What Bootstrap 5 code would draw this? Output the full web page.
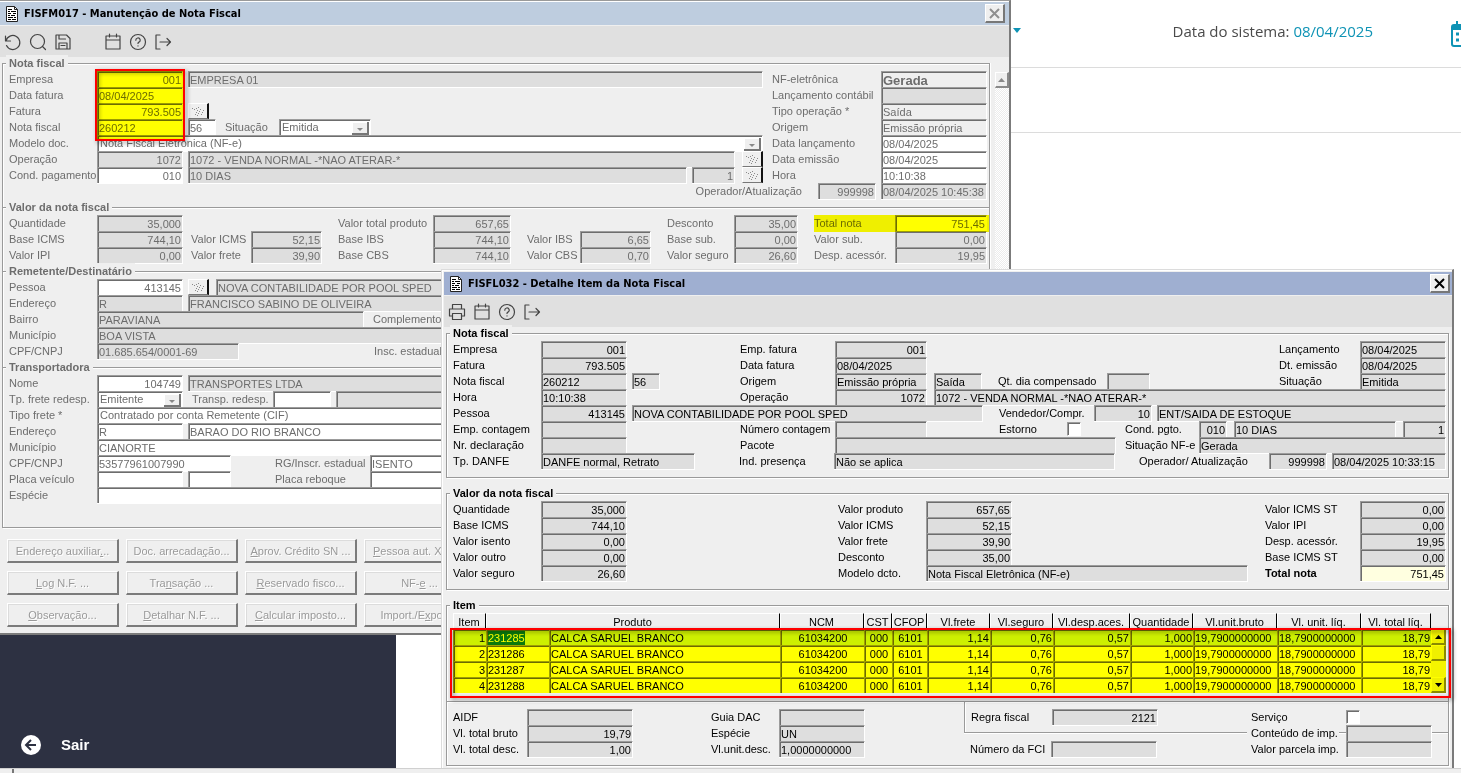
<!DOCTYPE html>
<html lang="pt-BR">
<head>
<meta charset="utf-8">
<meta name="viewport" content="width=device-width, initial-scale=1">
<title>Manutenção de Nota Fiscal</title>
<link href="https://cdn.jsdelivr.net/npm/bootstrap@5.3.0/dist/css/bootstrap.min.css" rel="stylesheet">
<style>
body{font-family:"Liberation Sans",Arial,sans-serif;font-size:11px;line-height:16px;background:#fff;overflow:hidden}
/* host page */
.topbar{height:68px;border-bottom:1px solid #dcdcdc;color:#4a4a4a}
.sysdate{margin-right:78px;margin-top:-6px;font:15px/24px "Open Sans",sans-serif}
.teal{color:#0e93b5}
.subbar{height:65px;border-bottom:1px solid #dcdcdc}
.calic{margin-right:-12px;flex:none}
.drop{position:absolute;left:1013px;top:28px;border:4px solid transparent;border-top:5px solid #0e93b5;border-bottom:0}
.side{width:396px;height:140px;background:#2d3142;color:#fff;padding:0 0 13px 21px}
.side a{color:#fff;font:bold 15px/20px "Liberation Sans",sans-serif;gap:20px}
.strip{height:5px;background:#efefef;border-top:1px solid #d0d0d0}
.strip i{width:2px;height:5px;margin-left:12px;background:#777}
/* windows */
.win{position:absolute;background:#efefef;border-right:2px solid #7b7b7b}
.win1{left:0;top:0;width:calc(100% - 450px);color:#6d6d6d;border-top:1px solid #9a9a9a;border-bottom:2px solid #7b7b7b;box-shadow:inset 0 1px #fff}
.win2{left:441px;top:269px;right:7px;color:#000;border-left:1px solid #dcdcdc;border-top:1px solid #dcdcdc;box-shadow:inset 1px 1px #fff}
.tbar{height:22px;font:bold 11px/22px "DejaVu Sans Condensed","DejaVu Sans",sans-serif;color:#000;padding:0 4px 0 6px;gap:6px}
.win1 .tbar{margin:1px 0 0;background:#becddf;height:23px}
.win2 .tbar{margin:2px 0 0 2px;background:#9fafd1;height:23px;padding-right:2px}
.xbtn{width:20px;height:19px;padding:0;line-height:0;background:#efefef;border:1px solid #fff;border-right:2px solid #777;border-bottom:2px solid #777;color:inherit}
.win1 .xbtn{color:#8f8f8f}
.tools{height:31px;background:#e0e0e0;margin-top:1px}
.win2 .tools{margin-left:2px}
.tb{width:25px;padding:0;border:0;background:none;color:#444;line-height:0}
.tools svg{fill:none;stroke:currentColor;stroke-width:1.2;stroke-linecap:round;stroke-linejoin:round}
.pane1{margin:6px 0 0 2px}
.pane2{margin:6px 3px 2px 4px}
/* groups */
.grp{position:relative;min-width:0;border:1px solid #9a9a9a;border-bottom:0;padding:7px 2px 8px 6px;box-shadow:inset 1px 1px #fff,1px 0 #fff}
.grp.shut{border-bottom:1px solid #9a9a9a;box-shadow:inset 1px 1px #fff,1px 1px #fff}
.grp legend{position:absolute;top:-9px;left:3px;width:auto;margin:0;padding:0 3px;background:#efefef;font-size:11px;line-height:16px;font-weight:bold}
.apart{margin-bottom:15px}
.rw{display:flex;height:16px}
.rw label{height:16px;line-height:16px;white-space:nowrap;flex:none}
.fld{display:block;flex:none;min-width:0;height:16px;padding:1px 1px 0;border:1px solid #9c9c9c;border-right-color:#fff;border-bottom:0;border-radius:0;background:#dedede;color:inherit;font-size:11px;line-height:13px;box-shadow:inset 1px 1px #6d6d6d,0 1px #fff;outline:0}
.fld.on{background-color:#fff}
.fld.off{background:#efefef}
.fld.cream{background:#ffffe0}
.fld.r{text-align:right}
.fld.grow{flex:1 1 0}
.fld.big{font-size:13px;font-weight:bold}
select.fld{appearance:none;padding:0 2px;background-repeat:no-repeat;background-position:right 1px top 2px;background-image:url("data:image/svg+xml,%3Csvg xmlns='http://www.w3.org/2000/svg' width='17' height='13'%3E%3Crect width='17' height='13' fill='%23777'/%3E%3Crect width='15' height='11' fill='%23fff'/%3E%3Crect x='1' y='1' width='14' height='10' fill='%23efefef'/%3E%3Cpath d='M5 6h6l-3 3z' fill='%23888'/%3E%3C/svg%3E")}
.dots{flex:none;width:21px;height:16px;padding:0;line-height:0;background:#efefef;border:1px solid #fff;border-right:2px solid #111;border-bottom:1px solid #777}
.dots svg{width:12px;height:9px;fill:#8a8a8a}
.a28{width:28px}.a43{width:43px}.a48{width:48px}.a58{width:58px}.a86{width:86px}.a92{width:92px}.a106{width:106px}.a114{width:114px}
.a134{width:134px}.a142{width:142px}.a154{width:154px}.a267{width:267px}.a281{width:281px}.a322{width:322px}.a351{width:351px}
.l54{width:54px}.l68{width:68px}.l74{width:74px}.l81{width:81px}.l88{width:88px}.l95{width:95px}.l109{width:109px}.l130{width:130px}
.g5{margin-left:5px}.g7{margin-left:7px}.g9{margin-left:9px}.g16{margin-left:16px}.g44{margin-left:44px}.g72{margin-left:72px}
.g78{margin-left:78px}.g80{margin-left:80px}.g113{margin-left:113px}.g135{margin-left:135px}.g211{margin-left:211px}
.sums{display:grid;grid-template-columns:88px 86px 8px 60px 71px 16px 95px 78px 16px 53px 71px 16px 1fr 64px 16px 81px 92px;grid-auto-rows:16px}
.sums label{white-space:nowrap}
.sums .fld{width:100%}
.vbar{width:14px;margin:15px 0 0 5px;background:repeating-conic-gradient(#fff 0 25%,#ececec 0 50%) 0 0/2px 2px}
.sb{display:block;width:14px;height:16px;padding:0;line-height:0;background:#efefef;border:1px solid #fff;border-right:2px solid #8a8a8a;border-bottom:2px solid #8a8a8a}
.acts{display:grid;grid-template-columns:repeat(4,112px);gap:8px 7px;padding:11px 0 6px 7px}
.act{height:24px;padding:0;font-size:11px;line-height:18px;background:#efefef;color:#9a9a9a;text-shadow:1px 1px #fff;border:1px solid #fff;border-right:2px solid #7b7b7b;border-bottom:2px solid #7b7b7b;box-shadow:inset 1px 1px #dcdcdc;white-space:nowrap;overflow:hidden}
/* marker overlays */
.hl{position:absolute;pointer-events:none;z-index:2;border:2px solid #f00;filter:drop-shadow(2px 2px 2px rgba(0,0,0,.45))}
.hlfill{position:absolute;pointer-events:none;z-index:1;background:#ff0;mix-blend-mode:multiply}
.hl-key{left:92px;top:5px;width:90px;height:72px}
.hl-sum{right:0;top:7px;width:175px;height:17px}
.hl-tab{left:3px;right:-3px;top:22px;height:70px}
.chk{appearance:none;flex:none;width:14px;height:14px;margin:1px 0 0;background:#fff;border:1px solid #9c9c9c;border-right-color:#fff;border-bottom-color:#fff;box-shadow:inset 1px 1px #6d6d6d}
/* item table */
.items{table-layout:fixed;width:100%;border-collapse:separate;border-spacing:0;line-height:13px}
.items th{height:16px;padding:2px 0 0;font-weight:normal;text-align:center;border-top:1px solid #fff;border-right:1px solid #000;box-shadow:inset 1px 0 #fff;white-space:nowrap}
.items td{height:16px;padding:1px 1px 0 2px;text-align:right;white-space:nowrap;background:#ff0;border-top:1px solid #a0a000;border-left:1px solid #a0a000;box-shadow:inset 1px 1px #6b6b00}
.items tr.cur td{background:#cdf000}
.items td.s{text-align:left;padding-left:1px}
.items td.c{text-align:center}
.items mark{padding:1px 0;background:#0b7a0b;color:#ff0}
.ysb{width:15px;margin-top:16px;background:#f4f400}
.ysb .sb{width:15px;background:#f0f000;border-color:#ff0 #8a8a00 #8a8a00 #ff0}
.foot-l{padding:7px 0 0 6px}
.foot-r{width:484px}
.foot-r .top{padding-top:7px}
.foot-r .ends{padding:0 16px 0 6px}
.foot-r .chk{margin-right:72px}
.ln{border-bottom:1px solid #9a9a9a;height:8px;box-shadow:0 1px #fff}
.ln.s7{width:7px}.ln.s16{width:16px}
.lb{border-left:1px solid #9a9a9a;box-shadow:inset 1px 0 #fff}
.ln.lb{box-shadow:inset 1px 0 #fff,0 1px #fff}
.fin{margin-bottom:8px}
</style>
</head>
<body>
<svg class="d-none"><symbol id="lookup" viewBox="0 0 12 9"><path d="M0 1h1v1H0zM2 2h1v1H2zM4 1h1v1H4zM6 0h1v1H6zM5 3h1v1H5zM4 5h1v1H4zM3 7h1v1H3zM8 2h1v1H8zM7 4h1v1H7zM6 6h1v1H6zM5 8h1v1H5zM11 3h1v1h-1zM10 5h1v1h-1zM9 7h1v1H9z"/></symbol></svg>
<div class="d-flex flex-column min-vh-100">
  <header>
    <div class="topbar d-flex justify-content-end align-items-center">
      <span class="drop"></span>
      <div class="sysdate">Data do sistema: <span class="teal">08/04/2025</span></div>
      <svg class="calic" width="22" height="26" viewBox="0 0 22 26" fill="none" stroke="#0e93b5" stroke-width="2"><rect x="1" y="4" width="20" height="21" rx="2"/><path d="M1 7h20" stroke-width="4"/><path d="M6 0v5M16 0v5"/><path d="M5 13h3M10 13h3M15 13h3M5 19h3M10 19h3M15 19h3" stroke-width="3"/></svg>
    </div>
    <div class="subbar"></div>
  </header>
  <div class="side mt-auto d-flex align-items-end">
    <a href="#" class="d-flex align-items-center text-decoration-none"><svg width="20" height="20" viewBox="0 0 20 20"><circle cx="10" cy="10" r="10" fill="#fff"/><path d="M15 10H6M10 5l-5 5 5 5" fill="none" stroke="#2d3142" stroke-width="2"/></svg>Sair</a>
  </div>
  <div class="strip d-flex"><i></i></div>
</div>

<section class="win win1">
  <div class="tbar d-flex align-items-center">
    <svg width="12" height="16" viewBox="0 0 12 16"><path d="M.5.5h8l3 3v12H.5z" fill="#fff" stroke="#222"/><path d="M8.500.5v3h3" fill="none" stroke="#222"/><path d="M2 3.500h4M2 5.500h2M5 5.500h5M2 7.500h3M7 7.500h3M2 9.500h2M5 9.500h4M2 11.500h5M8 11.500h2M2 13.500h3M6 13.500h4" stroke="#000"/></svg>
    <span>FISFM017 - Manutenção de Nota Fiscal</span>
    <button class="xbtn ms-auto" aria-label="Fechar"><svg width="11" height="11" viewBox="0 0 11 11"><path d="M1 1l9 9M10 1l-9 9" stroke="currentColor" stroke-width="2"/></svg></button>
  </div>
  <div class="tools d-flex align-items-center">
    <button class="tb" aria-label="Desfazer"><svg width="18" height="18" viewBox="0 0 18 18"><path d="M1.500 3v5h5M2 8a7 7 0 1 1 .5 4.500"/></svg></button>
    <button class="tb" aria-label="Pesquisar"><svg width="18" height="18" viewBox="0 0 18 18"><circle cx="8.500" cy="8.500" r="7"/><path d="M13.500 13.500l3 3"/></svg></button>
    <button class="tb" aria-label="Salvar"><svg width="18" height="18" viewBox="0 0 18 18"><path d="M2 2h10.500L16 5.500V16H2zM5 16v-6h8v6M5 2v4h6.500M7 12.500h4"/></svg></button>
    <span class="tb"></span>
    <button class="tb" aria-label="Calendário"><svg width="18" height="18" viewBox="0 0 18 18"><path d="M2 3h14v13H2zM2 7h14M5.500 1v3M12.500 1v3"/></svg></button>
    <button class="tb" aria-label="Ajuda"><svg width="18" height="18" viewBox="0 0 18 18"><circle cx="9" cy="9" r="7.500"/><path d="M6.800 7.200a2.200 2.200 0 1 1 3.200 1.900c-.7.400-1 .7-1 1.400M9 12.800v.2"/></svg></button>
    <button class="tb" aria-label="Sair"><svg width="18" height="18" viewBox="0 0 18 18"><path d="M6 2H2v14h4M6 9h10M13 5.500L16.500 9 13 12.500"/></svg></button>
  </div>
  <div class="d-flex">
    <div class="flex-grow-1 pane1">
      <fieldset class="grp">
        <legend>Nota fiscal</legend>
        <div class="hlfill hl-key"></div><div class="hl hl-key"></div>
        <div class="d-flex">
          <div class="flex-grow-1">
            <div class="rw"><label class="l88" for="a1">Empresa</label><input class="fld on r a86" id="a1" value="001"><input class="fld g5 grow" aria-label="Nome da empresa" value="EMPRESA 01"></div>
            <div class="rw"><label class="l88" for="a2">Data fatura</label><input class="fld on a86" id="a2" value="08/04/2025"></div>
            <div class="rw"><label class="l88" for="a3">Fatura</label><input class="fld on r a86" id="a3" value="793.505"><button class="dots g5" aria-label="Procurar fatura"><svg><use href="#lookup"/></svg></button></div>
            <div class="rw"><label class="l88" for="a4">Nota fiscal</label><input class="fld on a86" id="a4" value="260212"><input class="fld on g5 a28" aria-label="Série" value="56"><label class="l54 g9" for="a5">Situação</label><select class="fld on a92" id="a5"><option>Emitida</option></select></div>
            <div class="rw"><label class="l88" for="a6">Modelo doc.</label><select class="fld on grow" id="a6"><option>Nota Fiscal Eletrônica (NF-e)</option></select></div>
            <div class="rw"><label class="l88" for="a7">Operação</label><input class="fld r a86" id="a7" value="1072"><input class="fld g5 grow" aria-label="Descrição da operação" value="1072 - VENDA NORMAL -*NAO ATERAR-*"><button class="dots g7" aria-label="Procurar operação"><svg><use href="#lookup"/></svg></button></div>
            <div class="rw"><label class="l88" for="a8">Cond. pagamento</label><input class="fld on r a86" id="a8" value="010"><input class="fld g5 grow" aria-label="Descrição da condição" value="10 DIAS"><input class="fld r g5 a43" aria-label="Parcelas" value="1"><button class="dots g7" aria-label="Procurar condição"><svg><use href="#lookup"/></svg></button></div>
          </div>
          <div class="g9">
            <div class="rw"><label class="l109" for="b1">NF-eletrônica</label><input class="fld off big a106" id="b1" value="Gerada"></div>
            <div class="rw"><label class="l109" for="b2">Lançamento contábil</label><input class="fld a106" id="b2"></div>
            <div class="rw"><label class="l109" for="b3">Tipo operação *</label><input class="fld off a106" id="b3" value="Saída"></div>
            <div class="rw"><label class="l109" for="b4">Origem</label><input class="fld off a106" id="b4" value="Emissão própria"></div>
            <div class="rw"><label class="l109" for="b5">Data lançamento</label><input class="fld on a106" id="b5" value="08/04/2025"></div>
            <div class="rw"><label class="l109" for="b6">Data emissão</label><input class="fld on a106" id="b6" value="08/04/2025"></div>
            <div class="rw"><label class="l109" for="b7">Hora</label><input class="fld on a106" id="b7" value="10:10:38"></div>
          </div>
        </div>
        <div class="rw justify-content-end"><label for="b8">Operador/Atualização</label><input class="fld r a58 g16" id="b8" value="999998"><input class="fld a106 g5" aria-label="Atualização" value="08/04/2025 10:45:38"></div>
      </fieldset>
      <fieldset class="grp">
        <legend>Valor da nota fiscal</legend>
        <div class="hlfill hl-sum"></div>
        <div class="sums">
          <label for="c1">Quantidade</label><input class="fld r" id="c1" value="35,000"><i></i><i></i><i></i><i></i><label for="c2">Valor total produto</label><input class="fld r" id="c2" value="657,65"><i></i><i></i><i></i><i></i><label for="c3">Desconto</label><input class="fld r" id="c3" value="35,00"><i></i><label for="c4">Total nota</label><input class="fld on r" id="c4" value="751,45">
          <label for="c5">Base ICMS</label><input class="fld r" id="c5" value="744,10"><i></i><label for="c6">Valor ICMS</label><input class="fld r" id="c6" value="52,15"><i></i><label for="c7">Base IBS</label><input class="fld r" id="c7" value="744,10"><i></i><label for="c8">Valor IBS</label><input class="fld r" id="c8" value="6,65"><i></i><label for="c9">Base sub.</label><input class="fld r" id="c9" value="0,00"><i></i><label for="c10">Valor sub.</label><input class="fld r" id="c10" value="0,00">
          <label for="c11">Valor IPI</label><input class="fld r" id="c11" value="0,00"><i></i><label for="c12">Valor frete</label><input class="fld r" id="c12" value="39,90"><i></i><label for="c13">Base CBS</label><input class="fld r" id="c13" value="744,10"><i></i><label for="c14">Valor CBS</label><input class="fld r" id="c14" value="0,70"><i></i><label for="c15">Valor seguro</label><input class="fld r" id="c15" value="26,60"><i></i><label for="c16">Desp. acessór.</label><input class="fld r" id="c16" value="19,95">
        </div>
      </fieldset>
      <fieldset class="grp">
        <legend>Remetente/Destinatário</legend>
        <div class="rw"><label class="l88" for="d1">Pessoa</label><input class="fld on r a86" id="d1" value="413145"><button class="dots g5" aria-label="Procurar pessoa"><svg><use href="#lookup"/></svg></button><input class="fld g7 grow" aria-label="Nome da pessoa" value="NOVA CONTABILIDADE POR POOL SPED"></div>
        <div class="rw"><label class="l88" for="d2">Endereço</label><input class="fld a86" id="d2" value="R"><input class="fld g5 grow" aria-label="Logradouro" value="FRANCISCO SABINO DE OLIVEIRA"></div>
        <div class="rw"><label class="l88" for="d3">Bairro</label><input class="fld a267" id="d3" value="PARAVIANA"><label class="l88 g9" for="d4">Complemento</label><input class="fld grow" id="d4"></div>
        <div class="rw"><label class="l88" for="d5">Município</label><input class="fld grow" id="d5" value="BOA VISTA"></div>
        <div class="rw"><label class="l88" for="d6">CPF/CNPJ</label><input class="fld a142" id="d6" value="01.685.654/0001-69"><label class="l88 g135" for="d7">Insc. estadual</label><input class="fld a106" id="d7"></div>
      </fieldset>
      <fieldset class="grp shut pb-4">
        <legend>Transportadora</legend>
        <div class="rw"><label class="l88" for="e1">Nome</label><input class="fld on r a86" id="e1" value="104749"><input class="fld g5 grow" aria-label="Nome da transportadora" value="TRANSPORTES LTDA"></div>
        <div class="rw"><label class="l88" for="e2">Tp. frete redesp.</label><select class="fld on a86" id="e2"><option>Emitente</option></select><label class="l81 g9" for="e3">Transp. redesp.</label><input class="fld on a58" id="e3"><input class="fld g5 grow" aria-label="Nome do redespacho"></div>
        <div class="rw"><label class="l88" for="e4">Tipo frete *</label><select class="fld on grow" id="e4"><option>Contratado por conta Remetente (CIF)</option></select></div>
        <div class="rw"><label class="l88" for="e5">Endereço</label><input class="fld on a86" id="e5" value="R"><input class="fld on g5 grow" aria-label="Logradouro" value="BARAO DO RIO BRANCO"></div>
        <div class="rw"><label class="l88" for="e6">Município</label><input class="fld on grow" id="e6" value="CIANORTE"></div>
        <div class="rw"><label class="l88" for="e7">CPF/CNPJ</label><input class="fld on a134" id="e7" value="53577961007990"><label class="l95 g44" for="e8">RG/Inscr. estadual</label><input class="fld on a106" id="e8" value="ISENTO"></div>
        <div class="rw"><label class="l88" for="e9">Placa veículo</label><input class="fld on a86" id="e9"><input class="fld on a43 g5" aria-label="UF"><label class="l95 g44" for="e10">Placa reboque</label><input class="fld on a106" id="e10"></div>
        <div class="rw"><label class="l88" for="e11">Espécie</label><input class="fld on grow" id="e11"></div>
      </fieldset>
    </div>
    <div class="vbar"><button class="sb" aria-label="Subir"><svg width="7" height="4"><path d="M0 4h7L3.500 0z" fill="#888"/></svg></button></div>
  </div>
  <div class="acts">
    <button class="act">Endereço auxiliar<u>.</u>..</button><button class="act">Doc. arrecada<u>ç</u>ão...</button><button class="act"><u>A</u>prov. Crédito SN ...</button><button class="act"><u>P</u>essoa aut. XML...</button>
    <button class="act"><u>L</u>og N.F. ...</button><button class="act">Tra<u>n</u>sação ...</button><button class="act"><u>R</u>eservado fisco...</button><button class="act">NF-<u>e</u> ...</button>
    <button class="act"><u>O</u>bservação...</button><button class="act"><u>D</u>etalhar N.F. ...</button><button class="act"><u>C</u>alcular imposto...</button><button class="act">Import./E<u>x</u>port...</button>
  </div>
</section>

<section class="win win2">
  <div class="tbar d-flex align-items-center">
    <svg width="12" height="16" viewBox="0 0 12 16"><path d="M.5.5h8l3 3v12H.5z" fill="#fff" stroke="#222"/><path d="M8.500.5v3h3" fill="none" stroke="#222"/><path d="M2 3.500h4M2 5.500h2M5 5.500h5M2 7.500h3M7 7.500h3M2 9.500h2M5 9.500h4M2 11.500h5M8 11.500h2M2 13.500h3M6 13.500h4" stroke="#000"/></svg>
    <span>FISFL032 - Detalhe Item da Nota Fiscal</span>
    <button class="xbtn ms-auto" aria-label="Fechar"><svg width="11" height="11" viewBox="0 0 11 11"><path d="M1 1l9 9M10 1l-9 9" stroke="currentColor" stroke-width="2"/></svg></button>
  </div>
  <div class="tools d-flex align-items-center">
    <button class="tb" aria-label="Imprimir"><svg width="18" height="18" viewBox="0 0 18 18"><path d="M4.500 6V1.500h9V6M4.500 13H1.500V6h15v7h-3M4.500 10.500h9v6h-9z"/></svg></button>
    <button class="tb" aria-label="Calendário"><svg width="18" height="18" viewBox="0 0 18 18"><path d="M2 3h14v13H2zM2 7h14M5.500 1v3M12.500 1v3"/></svg></button>
    <button class="tb" aria-label="Ajuda"><svg width="18" height="18" viewBox="0 0 18 18"><circle cx="9" cy="9" r="7.500"/><path d="M6.800 7.200a2.200 2.200 0 1 1 3.200 1.900c-.7.400-1 .7-1 1.400M9 12.800v.2"/></svg></button>
    <button class="tb" aria-label="Sair"><svg width="18" height="18" viewBox="0 0 18 18"><path d="M6 2H2v14h4M6 9h10M13 5.500L16.500 9 13 12.500"/></svg></button>
  </div>
  <div class="pane2">
    <fieldset class="grp shut apart">
      <legend>Nota fiscal</legend>
      <div class="rw"><label class="l88" for="f1">Empresa</label><input class="fld r a86" id="f1" value="001"><label class="l95 g113" for="f2">Emp. fatura</label><input class="fld r a92" id="f2" value="001"><label class="l81 ms-auto" for="f3">Lançamento</label><input class="fld a86" id="f3" value="08/04/2025"></div>
      <div class="rw"><label class="l88" for="f4">Fatura</label><input class="fld r a86" id="f4" value="793.505"><label class="l95 g113" for="f5">Data fatura</label><input class="fld a92" id="f5" value="08/04/2025"><label class="l81 ms-auto" for="f6">Dt. emissão</label><input class="fld a86" id="f6" value="08/04/2025"></div>
      <div class="rw"><label class="l88" for="f7">Nota fiscal</label><input class="fld a86" id="f7" value="260212"><input class="fld g5 a28" aria-label="Série" value="56"><label class="l95 g80" for="f8">Origem</label><input class="fld a92" id="f8" value="Emissão própria"><input class="fld g7 a48" aria-label="Tipo" value="Saída"><label class="l109 g16" for="f9">Qt. dia compensado</label><input class="fld a43" id="f9"><label class="l81 ms-auto" for="f10">Situação</label><input class="fld a86" id="f10" value="Emitida"></div>
      <div class="rw"><label class="l88" for="f11">Hora</label><input class="fld a86" id="f11" value="10:10:38"><label class="l95 g113" for="f12">Operação</label><input class="fld r a92" id="f12" value="1072"><input class="fld g7 grow" aria-label="Descrição da operação" value="1072 - VENDA NORMAL -*NAO ATERAR-*"></div>
      <div class="rw"><label class="l88" for="f13">Pessoa</label><input class="fld r a86" id="f13" value="413145"><input class="fld g5 a351" aria-label="Nome da pessoa" value="NOVA CONTABILIDADE POR POOL SPED"><label class="l95 g16" for="f14">Vendedor/Compr.</label><input class="fld r a58" id="f14" value="10"><input class="fld g5 grow" aria-label="Nome do vendedor" value="ENT/SAIDA DE ESTOQUE"></div>
      <div class="rw"><label class="l88" for="f15">Emp. contagem</label><input class="fld a86" id="f15"><label class="l95 g113" for="f16">Número contagem</label><input class="fld a92" id="f16"><label class="l68 g72" for="f17">Estorno</label><input type="checkbox" class="chk" id="f17"><label class="l74 g44" for="f18">Cond. pgto.</label><input class="fld r a28" id="f18" value="010"><input class="fld g7 grow" aria-label="Descrição da condição" value="10 DIAS"><input class="fld r g7 a43" aria-label="Parcelas" value="1"></div>
      <div class="rw"><label class="l88" for="f19">Nr. declaração</label><input class="fld a86" id="f19"><label class="l95 g113" for="f20">Pacote</label><input class="fld a281" id="f20"><label class="l74 g9" for="f21">Situação NF-e</label><input class="fld grow" id="f21" value="Gerada"></div>
      <div class="rw"><label class="l88" for="f22">Tp. DANFE</label><input class="fld a154" id="f22" value="DANFE normal, Retrato"><label class="l95 g44" for="f23">Ind. presença</label><input class="fld a281" id="f23" value="Não se aplica"><label class="l130 ms-auto" for="f24">Operador/ Atualização</label><input class="fld r a58" id="f24" value="999998"><input class="fld g5 a114" aria-label="Atualização" value="08/04/2025 10:33:15"></div>
    </fieldset>
    <fieldset class="grp shut apart">
      <legend>Valor da nota fiscal</legend>
      <div class="rw"><label class="l88" for="g1">Quantidade</label><input class="fld r a86" id="g1" value="35,000"><label class="l88 g211" for="g2">Valor produto</label><input class="fld r a86" id="g2" value="657,65"><label class="l95 ms-auto" for="g3">Valor ICMS ST</label><input class="fld r a86" id="g3" value="0,00"></div>
      <div class="rw"><label class="l88" for="g4">Base ICMS</label><input class="fld r a86" id="g4" value="744,10"><label class="l88 g211" for="g5">Valor ICMS</label><input class="fld r a86" id="g5" value="52,15"><label class="l95 ms-auto" for="g6">Valor IPI</label><input class="fld r a86" id="g6" value="0,00"></div>
      <div class="rw"><label class="l88" for="g7">Valor isento</label><input class="fld r a86" id="g7" value="0,00"><label class="l88 g211" for="g8">Valor frete</label><input class="fld r a86" id="g8" value="39,90"><label class="l95 ms-auto" for="g9">Desp. acessór.</label><input class="fld r a86" id="g9" value="19,95"></div>
      <div class="rw"><label class="l88" for="g10">Valor outro</label><input class="fld r a86" id="g10" value="0,00"><label class="l88 g211" for="g11">Desconto</label><input class="fld r a86" id="g11" value="35,00"><label class="l95 ms-auto" for="g12">Base ICMS ST</label><input class="fld r a86" id="g12" value="0,00"></div>
      <div class="rw"><label class="l88" for="g13">Valor seguro</label><input class="fld r a86" id="g13" value="26,60"><label class="l88 g211" for="g14">Modelo dcto.</label><input class="fld a322" id="g14" value="Nota Fiscal Eletrônica (NF-e)"><label class="l95 ms-auto fw-bold" for="g15">Total nota</label><input class="fld cream r a86" id="g15" value="751,45"></div>
    </fieldset>
    <fieldset class="grp">
      <legend>Item</legend>
      <div class="hl hl-tab"></div>
      <div class="d-flex">
        <table class="items">
          <colgroup><col style="width:33px"><col style="width:63px"><col><col style="width:84px"><col style="width:28px"><col style="width:35px"><col style="width:63px"><col style="width:63px"><col style="width:77px"><col style="width:63px"><col style="width:84px"><col style="width:84px"><col style="width:70px"></colgroup>
          <thead><tr><th>Item</th><th colspan="2">Produto</th><th>NCM</th><th>CST</th><th>CFOP</th><th>Vl.frete</th><th>Vl.seguro</th><th>Vl.desp.aces.</th><th>Quantidade</th><th>Vl.unit.bruto</th><th>Vl. unit. líq.</th><th>Vl. total líq.</th></tr></thead>
          <tbody>
            <tr class="cur"><td>1</td><td class="s"><mark>231285</mark></td><td class="s">CALCA SARUEL BRANCO</td><td class="c">61034200</td><td class="c">000</td><td class="c">6101</td><td>1,14</td><td>0,76</td><td>0,57</td><td>1,000</td><td class="s">19,7900000000</td><td class="s">18,7900000000</td><td>18,79</td></tr>
            <tr><td>2</td><td class="s">231286</td><td class="s">CALCA SARUEL BRANCO</td><td class="c">61034200</td><td class="c">000</td><td class="c">6101</td><td>1,14</td><td>0,76</td><td>0,57</td><td>1,000</td><td class="s">19,7900000000</td><td class="s">18,7900000000</td><td>18,79</td></tr>
            <tr><td>3</td><td class="s">231287</td><td class="s">CALCA SARUEL BRANCO</td><td class="c">61034200</td><td class="c">000</td><td class="c">6101</td><td>1,14</td><td>0,76</td><td>0,57</td><td>1,000</td><td class="s">19,7900000000</td><td class="s">18,7900000000</td><td>18,79</td></tr>
            <tr><td>4</td><td class="s">231288</td><td class="s">CALCA SARUEL BRANCO</td><td class="c">61034200</td><td class="c">000</td><td class="c">6101</td><td>1,14</td><td>0,76</td><td>0,57</td><td>1,000</td><td class="s">19,7900000000</td><td class="s">18,7900000000</td><td>18,79</td></tr>
          </tbody>
        </table>
        <div class="ysb d-flex flex-column"><button class="sb" aria-label="Subir"><svg width="7" height="4"><path d="M0 4h7L3.500 0z"/></svg></button><span class="sb"></span><button class="sb mt-auto" aria-label="Descer"><svg width="7" height="4"><path d="M0 0h7L3.500 4z"/></svg></button></div>
      </div>
    </fieldset>
    <div class="grp shut d-flex justify-content-between p-0">
      <div class="foot-l d-flex"><div>
        <div class="rw"><label class="l74" for="h1">AIDF</label><input class="fld a106" id="h1"></div>
        <div class="rw"><label class="l74" for="h2">Vl. total bruto</label><input class="fld r a106" id="h2" value="19,79"></div>
        <div class="rw"><label class="l74" for="h3">Vl. total desc.</label><input class="fld r a106" id="h3" value="1,00"></div>
      </div><div class="g78">
        <div class="rw"><label class="l68" for="h4">Guia DAC</label><input class="fld a86" id="h4"></div>
        <div class="rw"><label class="l68" for="h5">Espécie</label><input class="fld a86" id="h5" value="UN"></div>
        <div class="rw"><label class="l68" for="h6">Vl.unit.desc.</label><input class="fld a86" id="h6" value="1,0000000000"></div>
      </div></div>
      <div class="foot-r">
        <div class="lb top"><div class="rw ends"><label class="l81" for="i1">Regra fiscal</label><input class="fld r a106" id="i1" value="2121"><label class="ms-auto l95" for="i2">Serviço</label><input type="checkbox" class="chk" id="i2"></div></div>
        <div class="rw"><div class="ln lb flex-grow-1"></div><label class="l88 ms-1" for="i3">Conteúdo de imp.</label><div class="ln s7"></div><input class="fld a86" id="i3"><div class="ln s16"></div></div>
        <div class="rw ends fin"><label class="l81 ms-1px" for="i4">Número da FCI</label><input class="fld a106" id="i4"><label class="ms-auto l95" for="i5">Valor parcela imp.</label><input class="fld a86" id="i5"></div>
      </div>
    </div>
  </div>
</section>
<script src="https://cdn.jsdelivr.net/npm/bootstrap@5.3.0/dist/js/bootstrap.bundle.min.js"></script>
</body>
</html>
